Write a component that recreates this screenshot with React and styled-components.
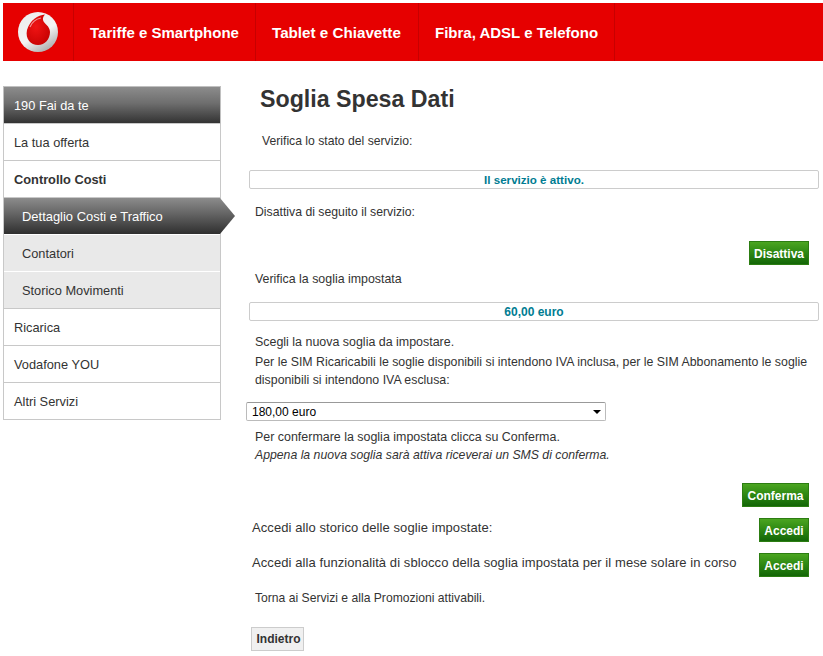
import React from 'react';
import styled, { createGlobalStyle } from 'styled-components';

const Global = createGlobalStyle`
    html, body { margin: 0; padding: 0; background: #fff; }
    body { font-family: "Liberation Sans", Arial, sans-serif; font-size: 12.8px; color: #333; }
`;

const Page = styled.div`
    width: 823px;
    height: 656px;
    overflow: hidden;
    padding-top: 3px;
    box-sizing: border-box;
`;

const Header = styled.header`
    display: flex;
    height: 58px;
    margin-left: 3px;
    background: #e60000;
`;

const LogoCell = styled.div`
    width: 70px;
    display: flex;
    align-items: center;
    justify-content: center;
    border-right: 1px solid #c80000;
`;

const NavItem = styled.a`
    display: flex;
    align-items: center;
    box-sizing: border-box;
    width: ${p => p.$width}px;
    padding-left: ${p => p.$pad}px;
    border-right: 1px solid #c80000;
    color: #fff;
    font-size: ${p => p.$size || 15}px;
    font-weight: bold;
`;

const Columns = styled.div`
    display: flex;
    margin-top: 25px;
`;

const Sidebar = styled.nav`
    width: 218px;
    margin-left: 3px;
    flex: none;
    align-self: flex-start;
    box-sizing: border-box;
    border: 1px solid #c8c8c8;
    border-top: none;
`;

const SideHead = styled.div`
    height: 38px;
    margin: 0 -1px;
    box-sizing: border-box;
    border: 1px solid #c0c0c0;
    border-bottom: 1px solid #c8c8c8;
    padding-left: 10px;
    display: flex;
    align-items: center;
    color: #fff;
    background: linear-gradient(#8c8c8c, #6e6e6e 45%, #333);
`;

const SideItem = styled.div`
    height: 37px;
    box-sizing: border-box;
    padding-left: 10px;
    display: flex;
    align-items: center;
    background: #fff;
    font-weight: ${p => (p.$bold ? 'bold' : 'normal')};
    border-bottom: 1px solid #c8c8c8;
    &:last-child { border-bottom: none; height: 36px; }
`;

const SubItem = styled.div`
    height: 37px;
    box-sizing: border-box;
    padding-left: 18px;
    display: flex;
    align-items: center;
    background: #e9e9e9;
    border-bottom: 1px solid ${p => (p.$last ? '#c8c8c8' : '#fff')};
`;

const ActiveItem = styled.div`
    position: relative;
    height: 37px;
    box-sizing: border-box;
    padding-left: 18px;
    display: flex;
    align-items: center;
    color: #fff;
    font-size: 12.95px;
    background: linear-gradient(#8c8c8c, #636363 45%, #2f2f2f);
    border-bottom: 1px solid #fff;
    &::after {
        content: '';
        position: absolute;
        left: 100%;
        top: 0;
        width: 15px;
        height: 36px;
        clip-path: polygon(0 0, 0 100%, 100% 50%);
        background: linear-gradient(#8c8c8c, #636363 45%, #2f2f2f);
    }
`;

const Main = styled.main`
    width: 572px;
    margin-left: 27px;
    flex: none;
`;

const Title = styled.h1`
    margin: 0 0 0 12px;
    font-size: 23.2px;
    line-height: 27px;
    font-weight: bold;
    color: #333;
`;

const Text = styled.p`
    margin: ${p => p.$top || 0}px 0 0 ${p => p.$left || 7}px;
    font-size: ${p => p.$size || 12.35}px;
    line-height: 18px;
    font-style: ${p => (p.$italic ? 'italic' : 'normal')};
    white-space: nowrap;
`;

const StatusBox = styled.div`
    height: 19px;
    margin: ${p => p.$top}px 1px 0 1px;
    box-sizing: border-box;
    border: 1px solid #ccc;
    border-radius: 2px;
    display: flex;
    align-items: center;
    justify-content: center;
    font-size: ${p => p.$size || 12}px;
    font-weight: bold;
    color: #007c92;
`;

const ButtonRow = styled.div`
    display: flex;
    justify-content: flex-end;
    padding-right: 11px;
    margin-top: ${p => p.$top}px;
`;

const GreenButton = styled.button`
    width: ${p => p.$width}px;
    height: 24px;
    padding: 2px 0 0;
    box-sizing: border-box;
    border: 1px solid #2c7d12;
    background: linear-gradient(#4ba521, #2f8a14 45%, #136607);
    color: #fff;
    font-family: inherit;
    font-size: 12px;
    font-weight: bold;
    flex: none;
`;

const SelectWrap = styled.div`
    position: relative;
    width: 360px;
    height: 19px;
    margin: ${p => p.$top}px 0 0 -2px;
    &::after {
        content: '';
        position: absolute;
        right: 5px;
        top: 8px;
        border-left: 4px solid transparent;
        border-right: 4px solid transparent;
        border-top: 4px solid #000;
        pointer-events: none;
    }
`;

const Select = styled.select`
    display: block;
    appearance: none;
    box-sizing: border-box;
    width: 100%;
    height: 100%;
    padding: 0 0 0 5px;
    font-family: inherit;
    font-size: 12px;
    background: #fff;
    color: #000;
    border: 1px solid #bbb;
    border-top-color: #999;
    border-radius: 2px;
`;

const ActionRow = styled.div`
    display: flex;
    justify-content: space-between;
    align-items: flex-start;
    height: 24px;
    padding: 0 11px 0 4px;
    margin-top: ${p => p.$top}px;
`;

const ActionLabel = styled.span`
    padding-top: 2px;
    font-size: 13px;
    letter-spacing: 0.08px;
    white-space: nowrap;
`;

const BackButton = styled.button`
    display: block;
    height: 24px;
    width: 53px;
    padding: 0 0 0 2px;
    margin: ${p => p.$top}px 0 0 3px;
    box-sizing: border-box;
    border: 1px solid #ccc;
    background: #f0f0f0;
    color: #333;
    font-family: inherit;
    font-size: 12px;
    font-weight: bold;
`;

const Logo = () => (
    <svg width="40" height="40" viewBox="0 0 40 40">
        <defs>
            <linearGradient id="ring" x1="0.2" y1="0" x2="0.8" y2="1">
                <stop offset="0" stopColor="#ececec" />
                <stop offset="0.55" stopColor="#f4f4f4" />
                <stop offset="1" stopColor="#a4a4a4" />
            </linearGradient>
            <radialGradient id="core" cx="0.4" cy="0.4" r="0.75">
                <stop offset="0" stopColor="#f01414" />
                <stop offset="1" stopColor="#c20000" />
            </radialGradient>
        </defs>
        <circle cx="20" cy="20" r="20" fill="url(#ring)" />
        <path d="M27 2.5C20 3 12 8 9 18C7 27 13 33 20 33C27 33 32 27 32 20C32 14 26 12 25 8C24.7 6 25.5 4 27 2.5Z" fill="url(#core)" />
        <path d="M12 15C14 10 18 7 23 6" fill="none" stroke="#fff" strokeWidth="1.2" opacity="0.55" />
    </svg>
);

export default function App() {
    return (
        <Page>
            <Global />
            <Header>
                <LogoCell><Logo /></LogoCell>
                <NavItem $width={182} $pad={16}>Tariffe e Smartphone</NavItem>
                <NavItem $width={163} $pad={16} $size={15.2}>Tablet e Chiavette</NavItem>
                <NavItem $width={196} $pad={16}>Fibra, ADSL e Telefono</NavItem>
            </Header>
            <Columns>
                <Sidebar>
                    <SideHead>190 Fai da te</SideHead>
                    <SideItem>La tua offerta</SideItem>
                    <SideItem $bold>Controllo Costi</SideItem>
                    <ActiveItem>Dettaglio Costi e Traffico</ActiveItem>
                    <SubItem>Contatori</SubItem>
                    <SubItem $last>Storico Movimenti</SubItem>
                    <SideItem>Ricarica</SideItem>
                    <SideItem>Vodafone YOU</SideItem>
                    <SideItem>Altri Servizi</SideItem>
                </Sidebar>
                <Main>
                    <Title>Soglia Spesa Dati</Title>
                    <Text $top={19} $left={14} $size={12.2}>Verifica lo stato del servizio:</Text>
                    <StatusBox $top={20} $size={11.6}>Il servizio è attivo.</StatusBox>
                    <Text $top={14} $size={12.25}>Disattiva di seguito il servizio:</Text>
                    <ButtonRow $top={20}><GreenButton $width={60}>Disattiva</GreenButton></ButtonRow>
                    <Text $top={5} $size={12.4}>Verifica la soglia impostata</Text>
                    <StatusBox $top={14}>60,00 euro</StatusBox>
                    <Text $top={12} $size={12.45}>Scegli la nuova soglia da impostare.</Text>
                    <Text $top={2}>Per le SIM Ricaricabili le soglie disponibili si intendono IVA inclusa, per le SIM Abbonamento le soglie<br />disponibili si intendono IVA esclusa:</Text>
                    <SelectWrap $top={13}>
                        <Select defaultValue="180">
                            <option value="180">180,00 euro</option>
                        </Select>
                    </SelectWrap>
                    <Text $top={7} $size={12.45}>Per confermare la soglia impostata clicca su Conferma.</Text>
                    <Text $italic $size={12.25}>Appena la nuova soglia sarà attiva riceverai un SMS di conferma.</Text>
                    <ButtonRow $top={19}><GreenButton $width={67}>Conferma</GreenButton></ButtonRow>
                    <ActionRow $top={11}>
                        <ActionLabel>Accedi allo storico delle soglie impostate:</ActionLabel>
                        <GreenButton $width={50}>Accedi</GreenButton>
                    </ActionRow>
                    <ActionRow $top={11}>
                        <ActionLabel>Accedi alla funzionalità di sblocco della soglia impostata per il mese solare in corso</ActionLabel>
                        <GreenButton $width={50}>Accedi</GreenButton>
                    </ActionRow>
                    <Text $top={12} $size={12.15}>Torna ai Servizi e alla Promozioni attivabili.</Text>
                    <BackButton $top={20}>Indietro</BackButton>
                </Main>
            </Columns>
        </Page>
    );
}
